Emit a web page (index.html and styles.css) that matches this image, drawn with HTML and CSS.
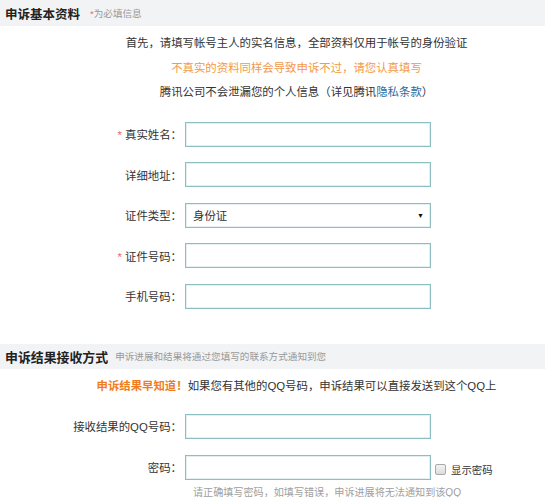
FILE: index.html
```html
<!DOCTYPE html>
<html lang="zh-CN">
<head>
<meta charset="utf-8">
<title>申诉基本资料</title>
<link rel="stylesheet" href="styles.css">
</head>
<body>
<div class="page">
  <div class="sec-head first">
    <span class="sec-title">申诉基本资料</span>
    <span class="sec-note"><span class="req">*</span>为必填信息</span>
  </div>
  <div class="intro">
    <p>首先，请填写帐号主人的实名信息，全部资料仅用于帐号的身份验证</p>
    <p class="warn">不真实的资料同样会导致申诉不过，请您认真填写</p>
    <p>腾讯公司不会泄漏您的个人信息（详见腾讯<a class="link" href="#">隐私条款</a>）</p>
  </div>
  <div class="form">
    <div class="row">
      <label class="lbl"><span class="req">*</span>真实姓名：</label>
      <span class="field"></span>
    </div>
    <div class="row">
      <label class="lbl">详细地址：</label>
      <span class="field"></span>
    </div>
    <div class="row">
      <label class="lbl">证件类型：</label>
      <span class="field select"><span class="sel-text">身份证</span><span class="sel-arrow">▼</span></span>
    </div>
    <div class="row">
      <label class="lbl"><span class="req">*</span>证件号码：</label>
      <span class="field"></span>
    </div>
    <div class="row">
      <label class="lbl">手机号码：</label>
      <span class="field"></span>
    </div>
  </div>

  <div class="sec-head second">
    <span class="sec-title big">申诉结果接收方式</span>
    <span class="sec-note big">申诉进展和结果将通过您填写的联系方式通知到您</span>
  </div>
  <div class="intro tip">
    <p><span class="tip-strong">申诉结果早知道！</span>如果您有其他的QQ号码，申诉结果可以直接发送到这个QQ上</p>
  </div>
  <div class="form form2">
    <div class="row">
      <label class="lbl">接收结果的QQ号码：</label>
      <span class="field"></span>
    </div>
    <div class="row">
      <label class="lbl">密码：</label>
      <span class="field"></span>
      <span class="show-pwd"><span class="checkbox"></span>显示密码</span>
    </div>
    <div class="hint-row">
      <span class="hint">请正确填写密码，如填写错误，申诉进展将无法通知到该QQ</span>
    </div>
  </div>
</div>
</body>
</html>
```

FILE: styles.css
```css
html, body {
  margin: 0;
  padding: 0;
  background: #ffffff;
}
body {
  font-family: "Liberation Sans", "Noto Sans CJK SC", sans-serif;
  font-size: 11.4px;
  color: #333333;
}
.page {
  width: 545px;
  height: 497px;
  overflow: hidden;
}
p { margin: 0; }

.sec-head {
  background: #f2f3f4;
  padding-left: 5px;
  display: flex;
  align-items: center;
}
.sec-head.first { height: 26px; }
.sec-head.second { height: 25px; margin-top: 35px; }
.sec-title {
  font-weight: bold;
  font-size: 12.5px;
  color: #222222;
}
.sec-title.big { font-size: 12.9px; }
.sec-note {
  margin-left: 10px;
  font-size: 9.6px;
  color: #999999;
}
.sec-note.big { margin-left: 7px; }
.req { color: #e46d6d; }

.intro {
  padding-left: 48px;
  padding-top: 5px;
  text-align: center;
  line-height: 24.5px;
}
.intro .warn { color: #f39a4a; }
.link { color: #2c6aa0; text-decoration: none; }
.intro.tip { padding-top: 5px; line-height: 25px; }
.tip-strong { color: #f07c1e; font-weight: bold; }

.form {
  margin-top: 17px;
  display: flex;
  flex-direction: column;
  gap: 15.5px;
}
.form2 { margin-top: 15px; gap: 16px; }
.row {
  display: grid;
  grid-template-columns: 182px 246px auto;
  column-gap: 3px;
  align-items: center;
  height: 25px;
}
.lbl {
  text-align: right;
  white-space: nowrap;
}
.lbl .req { margin-right: 3px; }
.field {
  box-sizing: border-box;
  height: 25px;
  border: 1px solid #8dbfc2;
  background: #ffffff;
  box-shadow: inset 0 0 0 1px #e3f0f1;
}
.select {
  display: flex;
  align-items: center;
  justify-content: space-between;
  padding: 0 6px 0 7px;
  color: #333333;
}
.sel-arrow {
  font-size: 7px;
  color: #111111;
}
.show-pwd {
  display: flex;
  align-items: center;
  margin-left: 1px;
  font-size: 10.4px;
  color: #333333;
  position: relative;
  top: 2px;
}
.checkbox {
  box-sizing: border-box;
  width: 11px;
  height: 11px;
  border: 1px solid #a9a9a9;
  border-radius: 2px;
  background: linear-gradient(#f4f4f4, #dcdcdc);
  margin-right: 5px;
}
.hint-row {
  margin-top: -12px;
  padding-left: 193px;
}
.hint {
  font-size: 10.1px;
  color: #a0a0a0;
}
```
